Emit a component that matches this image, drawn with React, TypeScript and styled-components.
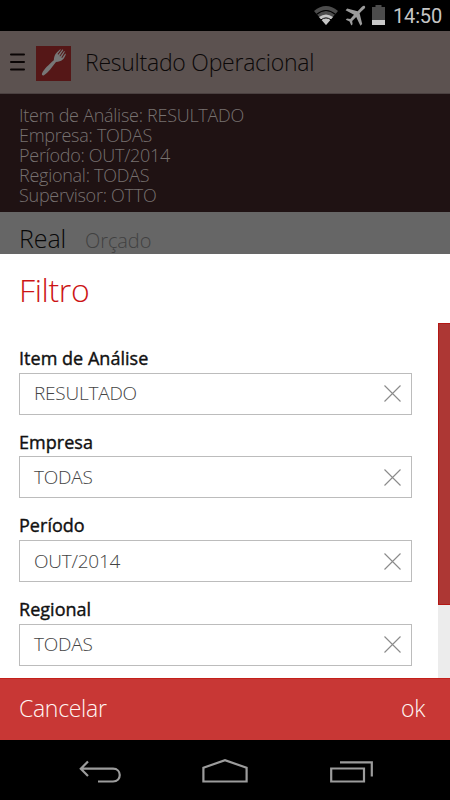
import React from "react";
import styled, { createGlobalStyle } from "styled-components";

const GlobalStyle = createGlobalStyle`
  * { box-sizing: border-box; }
  body { margin: 0; background: #000; }
`;

const Screen = styled.div`
  width: 450px;
  height: 800px;
  display: flex;
  flex-direction: column;
  overflow: hidden;
  background: #000;
  font-family: "Open Sans", "Noto Sans", sans-serif;
  font-weight: 300;
  white-space: nowrap;
`;

const StatusBar = styled.div`
  height: 31px;
  flex: none;
  display: flex;
  justify-content: flex-end;
  padding-right: 8px;
`;

const StatusIcons = styled.svg`
  width: 80px;
  height: 31px;
`;

const Clock = styled.time`
  width: 49px;
  font: 400 20px/32px Roboto, sans-serif;
  letter-spacing: -0.15px;
  color: #c6c6c6;
`;

const Header = styled.header`
  height: 63px;
  flex: none;
  display: flex;
  align-items: center;
  padding: 0 0 0 9px;
  background: #5c5250;
  border-bottom: 1px solid #4a4040;
`;

const MenuIcon = styled.svg`
  width: 17px;
  height: 20px;
  margin-right: 10px;
`;

const Logo = styled.svg`
  width: 35px;
  height: 35px;
  margin: 3px 14px 0 0;
`;

const PageTitle = styled.h1`
  margin: 0;
  font-size: 23px;
  line-height: 32px;
  font-weight: 300;
  letter-spacing: -0.25px;
  color: #0b0808;
`;

const Summary = styled.section`
  height: 118px;
  flex: none;
  padding: 11px 19px 0;
  background: #1f1213;
  color: #777170;
  font-size: 18px;
  line-height: 20px;
`;

const SummaryLine = styled.div`
  letter-spacing: -0.27px;
`;

const Tabs = styled.div`
  height: 42px;
  flex: none;
  display: flex;
  align-items: baseline;
  gap: 19px;
  padding: 11px 19px 0;
  background: #666;
`;

const Tab = styled.span<{ $active?: boolean }>`
  font-size: ${(p) => (p.$active ? 25 : 20)}px;
  line-height: 31px;
  letter-spacing: -0.1px;
  color: ${(p) => (p.$active ? "#080808" : "#414141")};
`;

const Dialog = styled.section`
  height: 424px;
  flex: none;
  display: flex;
  flex-direction: column;
  background: #fff;
`;

const DialogTitle = styled.h2`
  height: 69px;
  flex: none;
  margin: 0;
  padding: 14px 19px 0;
  font-size: 32px;
  line-height: 44px;
  font-weight: 300;
  letter-spacing: -0.35px;
  color: #cc1414;
`;

const ScrollArea = styled.div`
  flex: 1;
  min-height: 0;
  display: flex;
  justify-content: space-between;
`;

const Form = styled.div`
  width: 393px;
  margin-left: 19px;
  padding-top: 23px;
`;

const Field = styled.div`
  height: 83.7px;
`;

const Label = styled.label`
  display: block;
  height: 26.7px;
  font-size: 18px;
  line-height: 25px;
  font-weight: 400;
  -webkit-text-stroke: 0.4px #111;
  letter-spacing: 0.03px;
  color: #111;
`;

const InputBox = styled.div`
  height: 42px;
  display: flex;
  align-items: center;
  justify-content: space-between;
  padding: 0 10px 0 14px;
  border: 1px solid #bcbcbc;
`;

const Value = styled.span`
  padding-bottom: 1px;
  font-size: 19px;
  line-height: 38px;
  letter-spacing: -0.22px;
  color: #444;
`;

const ClearIcon = styled.svg`
  width: 17px;
  height: 17px;
`;

const ScrollTrack = styled.div`
  width: 12.5px;
  background: #ececec;
`;

const ScrollThumb = styled.div`
  height: 282px;
  background: #ad3734;
  border: solid #b41714;
  border-width: 1px 0 1px 1px;
`;

const Footer = styled.footer`
  height: 62px;
  flex: none;
  display: flex;
  justify-content: space-between;
  padding: 0 25px 0 19px;
  background: #c83735;
  border-top: 1px solid #c4201b;
`;

const Action = styled.button`
  padding: 0;
  border: 0;
  background: none;
  font: inherit;
  font-size: 23px;
  line-height: 59px;
  height: 59px;
  letter-spacing: -0.3px;
  color: #fff5f3;
`;

const NavBar = styled.nav`
  height: 60px;
  flex: none;
`;

const NavIcons = styled.svg`
  display: block;
  width: 450px;
  height: 60px;
`;

const summary = [
  "Item de Análise: RESULTADO",
  "Empresa: TODAS",
  "Período: OUT/2014",
  "Regional: TODAS",
  "Supervisor: OTTO",
];

const fields = [
  { label: "Item de Análise", value: "RESULTADO" },
  { label: "Empresa", value: "TODAS" },
  { label: "Período", value: "OUT/2014" },
  { label: "Regional", value: "TODAS" },
];

export default function App() {
  return (
    <>
      <GlobalStyle />
      <Screen>
        <StatusBar>
          <StatusIcons viewBox="0 0 80 31">
            <path d="M1 11Q13 1 25 11L13 25Z" fill="#4c4c4c" />
            <path d="M3.7 14.2Q13 6.8 22.3 14.2" fill="none" stroke="#000" strokeWidth="1.1" />
            <path d="M6 17Q13 11.8 20 17L13 25Z" fill="#c6c6c6" />
            <path d="M8 19.8Q13 16 18 19.8" fill="none" stroke="#000" strokeWidth="1" />
            <path d="M51.8 6.2C50.5 5 48.8 6.8 46.8 9L44.6 11.2 34.2 8.4 32.6 10.2 41 14.8 37.3 19 34 18.5 32.8 19.8 36.6 21.6 38.3 25.5 39.6 24.2 39.2 21 43.2 17.1 47.4 25.7 49.2 24.1 46.6 13.3 49 10.8C50.8 9 53.2 7.6 51.8 6.2Z" fill="#9c9c9c" />
            <path d="M59 7h3.5V5h6v2H72v18H59Z" fill="#4c4c4c" />
            <path d="M59 20h13v5H59Z" fill="#c9c9c9" />
          </StatusIcons>
          <Clock>14:50</Clock>
        </StatusBar>
        <Header>
          <MenuIcon viewBox="0 0 17 20">
            <path d="M2 2.5H15M2 10H15M2 17.5H15" stroke="#0a0505" strokeWidth="2" strokeLinecap="round" />
          </MenuIcon>
          <Logo viewBox="0 0 35 35">
            <rect width="35" height="35" fill="#551717" />
            <path d="M6 27.5C7.8 23 13 18.5 17.8 14.2C18 11.2 18.6 8.5 21 6.2L24.2 3.2 24.9 3.8 21.6 8.1 22.3 8.8 26.6 3.3 27.3 3.9 23.5 10 24.1 10.6 28.2 5 28.9 5.6 25.4 11.5 26.1 12 29.2 7.4 29.9 8C28.5 13 25.5 15.8 20 15.9C15.5 21.5 12.5 26.5 8 29.2C6.8 29.8 5.4 29 6 27.5Z" fill="#777" />
          </Logo>
          <PageTitle>Resultado Operacional</PageTitle>
        </Header>
        <Summary>
          {summary.map((text) => (
            <SummaryLine key={text}>{text}</SummaryLine>
          ))}
        </Summary>
        <Tabs>
          <Tab $active>Real</Tab>
          <Tab>Orçado</Tab>
        </Tabs>
        <Dialog>
          <DialogTitle>Filtro</DialogTitle>
          <ScrollArea>
            <Form>
              {fields.map((f) => (
                <Field key={f.label}>
                  <Label>{f.label}</Label>
                  <InputBox>
                    <Value>{f.value}</Value>
                    <ClearIcon viewBox="0 0 17 17">
                      <path d="M.5.5 16.5 16.5M16.5.5.5 16.5" stroke="#8b8b8b" strokeWidth="1.1" />
                    </ClearIcon>
                  </InputBox>
                </Field>
              ))}
            </Form>
            <ScrollTrack>
              <ScrollThumb />
            </ScrollTrack>
          </ScrollArea>
        </Dialog>
        <Footer>
          <Action>Cancelar</Action>
          <Action>ok</Action>
        </Footer>
        <NavBar>
          <NavIcons viewBox="0 0 450 60" fill="none" stroke="#9c9c9c" strokeWidth="2.2">
            <path d="M88 21.5 80.8 28.7 88 36M81 28.7H113C122 28.7 122 41.5 113 41.5H98" />
            <path d="M203.4 41.5V27.8L225 20.2 246.6 27.8V41.5Z" />
            <path d="M331.2 28.5H364V41.5H331.2ZM340 22.3H371.8V36.5" />
          </NavIcons>
        </NavBar>
      </Screen>
    </>
  );
}
